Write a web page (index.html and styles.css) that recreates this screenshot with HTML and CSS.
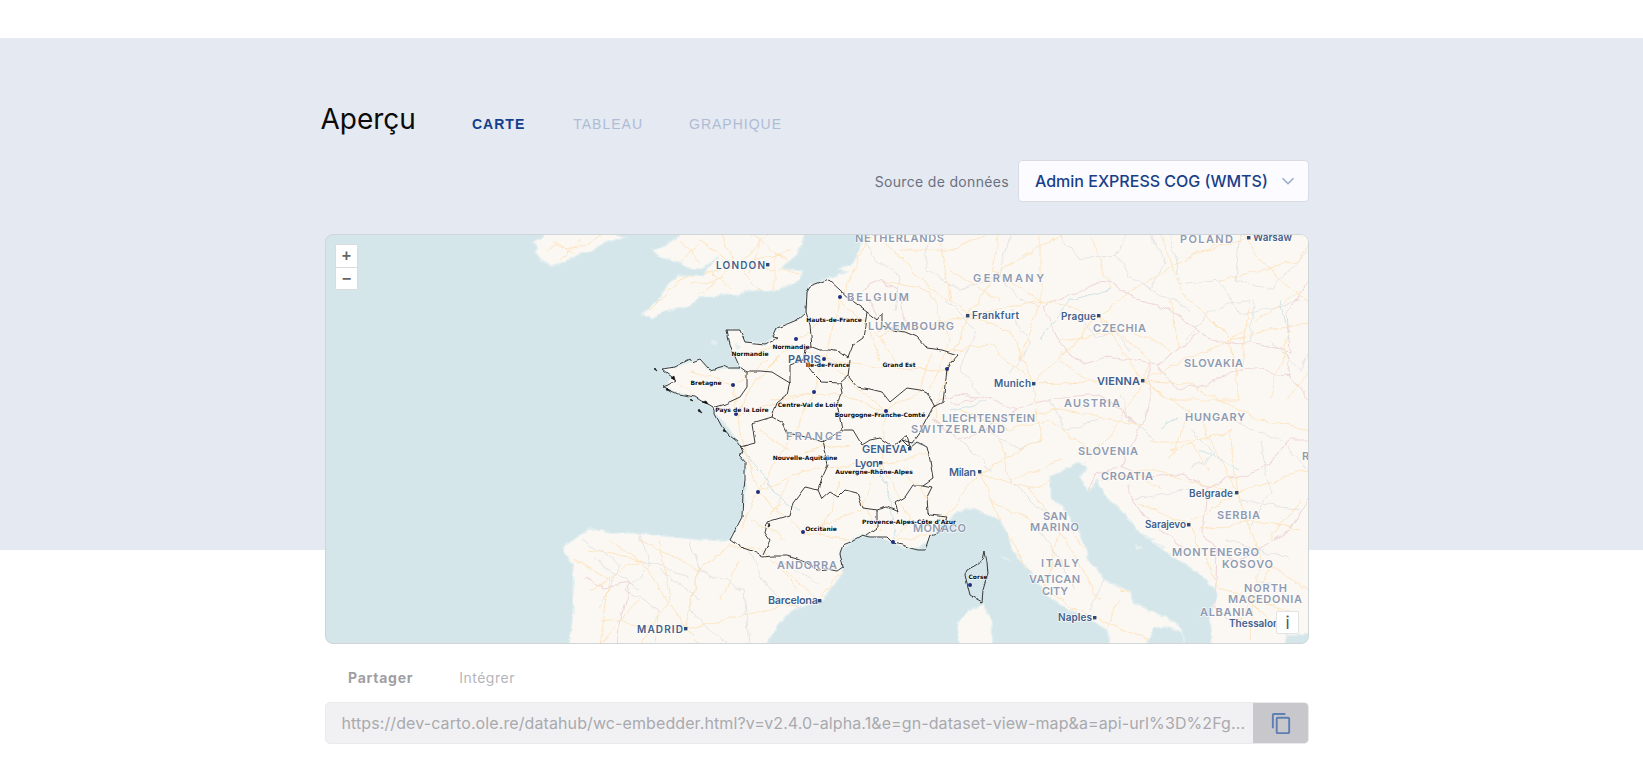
FILE: index.html
```html
<!DOCTYPE html>
<html lang="fr">
<head>
<meta charset="utf-8">
<title>Aperçu</title>
<link rel="stylesheet" href="styles.css">
</head>
<body>
<div class="band"></div>
<main class="preview">
  <header class="head">
    <h2 class="title">Aperçu</h2>
    <nav class="tabs">
      <span class="tab tab-active">CARTE</span>
      <span class="tab">TABLEAU</span>
      <span class="tab">GRAPHIQUE</span>
    </nav>
  </header>
  <div class="source">
    <span class="source-label">Source de données</span>
    <div class="select">
      <span>Admin EXPRESS COG (WMTS)</span>
      <svg class="chevron" viewBox="0 0 14 8"><path d="M1.5 1.2 7 6.6l5.5-5.4"/></svg>
    </div>
  </div>
  <section class="map">
    <svg class="map-svg" viewBox="325 234 984 410" preserveAspectRatio="none">
      <defs>
        <filter id="coast" filterUnits="userSpaceOnUse" x="315" y="224" width="1010" height="430">
          <feTurbulence type="fractalNoise" baseFrequency="0.11" numOctaves="3" seed="4"/>
          <feDisplacementMap in="SourceGraphic" scale="5" xChannelSelector="R" yChannelSelector="G"/>
        </filter>
        <filter id="wiggle" filterUnits="userSpaceOnUse" x="315" y="224" width="1010" height="430">
          <feTurbulence type="fractalNoise" baseFrequency="0.06" numOctaves="3" seed="9"/>
          <feDisplacementMap in="SourceGraphic" scale="9" xChannelSelector="R" yChannelSelector="G"/>
        </filter>
        <filter id="jag" filterUnits="userSpaceOnUse" x="315" y="224" width="1010" height="430">
          <feTurbulence type="fractalNoise" baseFrequency="0.1" numOctaves="2" seed="2"/>
          <feDisplacementMap in="SourceGraphic" scale="3.5" xChannelSelector="R" yChannelSelector="G"/>
        </filter>
        <clipPath id="landclip">
          <path d="M550 224 627 237 615 241 608 241 592 251 582 252 565 262 550 266 543 261 535 252 538 247 533 241 542 238Z"/>
          <path d="M678 224 678 236 665 246 653 249 658 257 678 262 692 269 705 267 718 256 702 276 678 276 668 284 658 301 642 314 653 319 665 311 688 306 698 297 713 296 727 294 738 297 745 291 775 291 798 281 803 271 782 267 798 254 808 224Z"/>
          <path d="M867 224 860 250 853 263 838 270 847 272 810 285 807 292 806 312 797 320 777 328 773 337 765 344 745 342 740 330 727 330 730 345 740 368 727 368 710 370 700 359 690 362 675 367 662 369 672 377 665 387 678 394 695 397 708 404 713 407 715 414 725 424 738 442 743 452 738 455 745 463 745 497 742 517 730 540 700 540 673 537 637 533 610 533 590 528 562 548 573 565 573 613 568 654 760 654 780 623 793 610 823 600 843 573 842 567 840 550 860 535 890 540 903 548 920 548 937 530 957 512 970 508 1000 520 1010 540 1013 553 1027 568 1040 587 1057 603 1090 620 1107 630 1113 654 1143 654 1153 628 1170 627 1183 635 1192 654 1177 623 1157 613 1133 603 1132 592 1110 583 1090 563 1083 540 1063 507 1050 498 1050 477 1078 462 1087 468 1080 477 1088 492 1097 480 1107 498 1123 512 1137 530 1170 555 1183 563 1207 580 1217 595 1210 617 1213 654 1283 654 1287 636 1320 632 1320 224Z"/>
          <path d="M957 622 970 610 983 605 992 620 993 654 960 654Z"/>
        </clipPath>
      </defs>
      <rect class="sea" x="325" y="234" width="984" height="410"/>
      <g class="land">
        <path d="M550 224 627 237 615 241 608 241 592 251 582 252 565 262 550 266 543 261 535 252 538 247 533 241 542 238Z"/>
        <path d="M678 224 678 236 665 246 653 249 658 257 678 262 692 269 705 267 718 256 702 276 678 276 668 284 658 301 642 314 653 319 665 311 688 306 698 297 713 296 727 294 738 297 745 291 775 291 798 281 803 271 782 267 798 254 808 224Z"/>
        <path d="M867 224 860 250 853 263 838 270 847 272 810 285 807 292 806 312 797 320 777 328 773 337 765 344 745 342 740 330 727 330 730 345 740 368 727 368 710 370 700 359 690 362 675 367 662 369 672 377 665 387 678 394 695 397 708 404 713 407 715 414 725 424 738 442 743 452 738 455 745 463 745 497 742 517 730 540 700 540 673 537 637 533 610 533 590 528 562 548 573 565 573 613 568 654 760 654 780 623 793 610 823 600 843 573 842 567 840 550 860 535 890 540 903 548 920 548 937 530 957 512 970 508 1000 520 1010 540 1013 553 1027 568 1040 587 1057 603 1090 620 1107 630 1113 654 1143 654 1153 628 1170 627 1183 635 1192 654 1177 623 1157 613 1133 603 1132 592 1110 583 1090 563 1083 540 1063 507 1050 498 1050 477 1078 462 1087 468 1080 477 1088 492 1097 480 1107 498 1123 512 1137 530 1170 555 1183 563 1207 580 1217 595 1210 617 1213 654 1283 654 1287 636 1320 632 1320 224Z"/>
        <path d="M957 622 970 610 983 605 992 620 993 654 960 654Z"/>
        <path d="M1143 534 1152 539 1147 539ZM1155 542 1165 547 1158 547ZM1136 545 1142 549 1137 549ZM1011 561 1005 557 1002 556ZM736 345 741 347 738 349ZM712 340 716 345 713 345Z"/>
      </g>
      <g clip-path="url(#landclip)">
        <path class="admin" d="M583 540 620 565 600 610M640 534 650 565 625 590 660 610 655 644M690 540 700 570 745 590 750 644M745 545 770 590 800 610M690 575 640 560M700 570 690 610 725 644M860 234 880 262 900 275 895 310M930 234 925 270 960 290 1000 276 1020 300 1040 306M945 300 975 330 960 370 985 397M1000 276 1010 234M1060 234 1080 260 1115 255 1130 234M1115 255 1135 280 1190 310M1170 234 1180 285 1220 280 1240 315 1300 300M1240 234 1235 280 1270 290 1309 250M1080 310 1095 340 1115 330 1130 350M1185 341 1210 310 1250 300M1250 342 1255 300M1120 395 1130 420 1155 440M1050 400 1065 430 1100 420M985 430 1020 450 1040 440M1010 480 1040 510 1065 520M1040 530 1060 560 1075 590M1090 610 1110 570M1230 420 1280 440 1309 470M1240 500 1300 510M1225 540 1290 560M1260 580 1300 600M1130 500 1190 490M1150 234 1165 262 1150 290M1010 310 1030 345 1010 375M1270 340 1300 370 1309 350M1190 430 1215 455 1190 470M1260 440 1270 490 1250 525M1170 590 1200 610M780 560 820 585M660 570 700 600M595 560 640 590M1000 560 1030 600M960 440 990 470"/>
        <path class="border" d="M1043 306 1067 296 1097 282 1113 284 1140 301 1157 304 1180 317 1200 331 1190 341 1157 364 1110 356 1083 364 1063 347 1053 327 1043 306M1200 331 1220 341 1250 342 1290 351 1287 314 1309 280M1157 364 1177 391 1210 384 1243 367 1290 377 1309 400M950 404 983 397 1017 407 1063 397 1100 394 1137 424M1150 364 1150 407 1137 434 1120 467 1150 477 1183 473 1207 487 1203 533 1217 550 1240 560 1290 530 1309 500M1130 483 1133 503 1157 527 1183 547M1207 487 1260 470 1290 440 1309 440M1120 467 1095 472 1088 492M933 407 955 395 983 397M933 420 960 440 985 430 1017 407M583 577 603 587 630 583 620 620 617 644M1217 550 1215 610 1240 625 1283 620M1290 377 1285 351M868 300 880 330 905 325 898 290 880 280 862 290"/>
        <path class="road" d="M700 240 735 265 790 250M720 234 735 265 770 234M735 265 680 280M735 265 700 295M735 265 760 290M735 265 800 272M680 280 650 310M700 245 680 262M750 234 790 262M710 270 730 290M690 285 725 278M680 240 700 262M760 240 750 275M775 250 775 290M545 250 590 245 600 234M560 260 580 240M552 244 575 252M824 359 790 345 750 352M824 359 840 300 870 234M824 359 814 392 790 440 758 492M824 359 900 370 947 369M824 359 886 411 881 463M881 463 910 520 893 542M881 463 930 455M758 492 803 532 850 540M758 492 740 530M803 532 860 510 881 463M736 414 814 392M736 414 733 385 690 370M736 414 758 492M805 450 850 445M893 542 930 535 980 472M758 492 805 470 881 463M840 300 880 335 968 316M880 335 900 370M947 369 968 316M947 369 935 420M790 345 760 375 736 414M796 339 825 320 867 320M770 400 814 392 860 400 900 420M733 385 770 360M880 360 870 330M930 355 920 390 886 411M905 470 930 500M790 480 770 520M840 480 820 540M860 500 880 530M700 400 680 385M760 430 790 450M750 520 785 540M686 629 640 560 590 550M686 629 600 620M686 629 700 570 730 545M686 629 760 610 820 601M820 601 840 570M820 601 760 550 730 545M686 629 700 643M700 570 640 540M590 590 640 560M600 643 640 600M820 601 790 630 770 643M575 560 610 580 600 644M610 540 640 560M660 540 670 600 640 644M740 560 720 600M780 570 800 590M880 234 910 270 968 316 1010 330 1034 384M968 316 1000 270 1060 234M968 316 1040 300 1099 316M1034 384 1099 316 1143 381M1034 384 1090 382 1143 381 1230 340 1309 320M1099 316 1140 285 1230 234M1099 316 1150 360 1143 381M1143 381 1190 385 1260 420 1309 430M1143 381 1170 400 1240 400M1034 384 1040 440 980 472M1143 381 1115 430 1080 465 1030 490 980 472M980 472 1000 520 1040 590 1095 618M1030 490 1060 530 1100 600M1095 618 1150 640M1060 530 1045 590M1237 493 1189 525 1220 590M1237 493 1150 470 1100 480M1237 493 1260 560 1250 640M1237 493 1200 420 1143 381M1237 493 1309 470M1260 560 1309 590M1189 525 1130 500M1000 234 990 270 1040 300M1160 234 1180 290 1230 340 1240 400M1230 340 1300 290M1240 234 1280 280 1309 300M950 270 1000 300M950 350 990 345 1034 384M1060 360 1090 382M1010 420 1060 410 1143 425M1170 450 1230 430 1237 493M900 250 950 250 990 234M880 280 930 290 950 340 930 390M940 240 950 300M1040 234 1040 300 1020 360M1090 234 1110 290M1200 250 1280 234M1220 280 1300 260 1309 240M1060 340 1130 330 1170 350M1170 300 1180 350M1250 300 1240 370M1290 330 1270 400M1190 410 1170 460M1290 400 1309 370M960 410 1010 430 1050 420 1090 450M1000 440 1010 480 1060 460M990 500 1030 520M1070 530 1120 590 1170 600M1120 600 1100 640M1150 440 1190 440 1210 470M1160 490 1130 470M1200 530 1250 520 1300 530M1220 590 1290 610M1270 570 1240 620M1300 500 1270 540M1290 640 1250 600"/>
        <path class="river" d="M1160 430 1180 418 1175 421M905 445 915 441 925 444M950 410 975 405 985 400M1040 340 1070 300 1110 290M1200 450 1240 470M1280 300 1290 340M880 470 890 500 893 540M760 470 775 495 800 510M745 452 758 470"/>
      </g>
      <path class="fr" d="M829 280 810 287 807 292 806 312 797 320 777 328 773 337 778 338 765 344 745 342 740 330 727 330 730 345 733 352 740 368 727 368 724 366 710 370 700 359 692 362 690 359 675 367 662 369 668 374 672 377 676 380 668 385 663 387 678 394 695 397 703 402 708 404 713 407 715 410 715 414 722 427 730 436 738 442 740 445 743 452 738 455 745 463 745 480 743 493 742 517 730 540 740 547 752 551 763 557 772 556 787 556 797 559 807 563 817 570 827 569 837 571 843 567 840 553 843 545 853 541 863 535 870 537 880 537 887 537 893 543 903 545 910 548 918 550 925 550 930 535 940 532 947 517 930 515 928 513 927 497 932 487 923 485 933 478 930 460 927 447 917 442 910 448 902 440 912 443 920 432 933 407 943 402 945 385 947 370 952 362 958 355 942 350 927 348 917 337 905 332 893 330 882 325 882 313 877 320 867 312 853 302 840 290 829 280Z"/>
      <path class="fr" d="M806 312 810 325 812 347 820 350 830 350 840 352 848 358 853 345 863 338 867 312M812 347 805 350 803 360 790 365 790 383 780 377 772 372 760 371 750 371 747 372 740 367M747 372 747 387 740 397 725 404 715 407M790 382 787 395 777 403 772 417 762 420 752 423 755 443 740 447M803 360 813 373 822 382 840 383 848 376 850 360M848 376 857 387 870 389 882 392 890 402 907 388 920 390 927 393 935 407M840 383 842 393 837 403 842 430 853 430 862 445 870 440 880 438 893 447 907 435 910 447M772 417 783 423 788 433 810 438 823 442 842 430M823 440 828 465 822 478 818 490 805 487 793 503 790 515 767 522 765 533 770 540 763 555M818 490 822 499 830 492 838 497 845 490 857 493 863 508 877 510 877 528 867 535M877 510 887 507 898 512 895 503 905 497 913 485 923 485"/>
      <path class="fr" d="M967 570 976 565 983 560 985 551 987 563 988 573 983 590 982 602 970 595 968 587 965 575Z"/>
      <path class="fr-blot" d="M702 402 708 404 706 401ZM698 411 702 413 699 409ZM671 378 675 380 674 376ZM769 523 768 527 770 526ZM654 369 657 371 655 368ZM666 390 670 391 667 388ZM690 400 693 401 691 399ZM723 431 726 432 724 429Z"/>
      <g class="country">
        <text x="855" y="242" textLength="89">NETHERLANDS</text>
        <text x="847" y="301" textLength="62">BELGIUM</text>
        <text x="868" y="330" textLength="86">LUXEMBOURG</text>
        <text x="973" y="282" textLength="71">GERMANY</text>
        <text x="1180" y="243" textLength="53">POLAND</text>
        <text x="1093" y="332" textLength="53">CZECHIA</text>
        <text x="1184" y="367" textLength="59">SLOVAKIA</text>
        <text x="1064" y="407" textLength="56">AUSTRIA</text>
        <text x="1185" y="421" textLength="60">HUNGARY</text>
        <text x="942" y="422" textLength="93">LIECHTENSTEIN</text>
        <text x="911" y="433" textLength="94">SWITZERLAND</text>
        <text x="786" y="440" textLength="56">FRANCE</text>
        <text x="1078" y="455" textLength="60">SLOVENIA</text>
        <text x="1101" y="480" textLength="52">CROATIA</text>
        <text x="1302" y="460">R</text>
        <text x="1217" y="519" textLength="43">SERBIA</text>
        <text x="913" y="532" textLength="53">MONACO</text>
        <text x="777" y="569" textLength="60">ANDORRA</text>
        <text x="1043" y="520" textLength="24">SAN</text>
        <text x="1030" y="531" textLength="49">MARINO</text>
        <text x="1041" y="567" textLength="38">ITALY</text>
        <text x="1029" y="583" textLength="51">VATICAN</text>
        <text x="1042" y="595" textLength="26">CITY</text>
        <text x="1172" y="556" textLength="87">MONTENEGRO</text>
        <text x="1222" y="568" textLength="51">KOSOVO</text>
        <text x="1244" y="592" textLength="43">NORTH</text>
        <text x="1228" y="603" textLength="74">MACEDONIA</text>
        <text x="1200" y="616" textLength="53">ALBANIA</text>
      </g>
      <g class="city">
        <text x="716" y="269" textLength="49">LONDON</text>
        <text x="788" y="363" textLength="33" class="city-lg">PARIS</text>
        <text x="862" y="453" textLength="45" class="city-lg">GENEVA</text>
        <text x="855" y="467" textLength="24" class="city-lg">Lyon</text>
        <text x="949" y="476" textLength="27" class="city-lg">Milan</text>
        <text x="768" y="604" textLength="50" class="city-lg">Barcelona</text>
        <text x="637" y="633" textLength="46">MADRID</text>
        <text x="1253" y="241" textLength="39">Warsaw</text>
        <text x="972" y="319" textLength="47">Frankfurt</text>
        <text x="1061" y="320" textLength="35">Prague</text>
        <text x="994" y="387" textLength="37">Munich</text>
        <text x="1097" y="385" textLength="43" class="city-lg">VIENNA</text>
        <text x="1189" y="497" textLength="44">Belgrade</text>
        <text x="1145" y="528" textLength="41">Sarajevo</text>
        <text x="1058" y="621" textLength="34">Naples</text>
        <text x="1229" y="627">Thessaloniki</text>
      </g>
      <g class="city-dot">
        <rect x="766" y="263" width="3.4" height="3.4"/>
        <rect x="978" y="470" width="3.4" height="3.4"/>
        <rect x="818" y="599" width="3.4" height="3.4"/>
        <rect x="684" y="627" width="3.4" height="3.4"/>
        <rect x="1247" y="236" width="3.4" height="3.4"/>
        <rect x="966" y="314" width="3.4" height="3.4"/>
        <rect x="1097" y="314" width="3.4" height="3.4"/>
        <rect x="1032" y="382" width="3.4" height="3.4"/>
        <rect x="1141" y="379" width="3.4" height="3.4"/>
        <rect x="1235" y="491" width="3.4" height="3.4"/>
        <rect x="1187" y="523" width="3.4" height="3.4"/>
        <rect x="1093" y="616" width="3.4" height="3.4"/>
        <rect x="879" y="461" width="3.4" height="3.4"/>
        <rect x="908" y="447" width="3.4" height="3.4"/>
      </g>
      <g class="dot">
        <circle cx="840" cy="297" r="2"/><circle cx="796" cy="339" r="2"/><circle cx="824" cy="359" r="2"/>
        <circle cx="947" cy="369" r="2"/><circle cx="733" cy="385" r="2"/><circle cx="814" cy="392" r="2"/>
        <circle cx="736" cy="414" r="2"/><circle cx="886" cy="411" r="2"/><circle cx="758" cy="492" r="2"/>
        <circle cx="803" cy="532" r="2"/><circle cx="893" cy="542" r="2"/><circle cx="970" cy="585" r="2"/>
      </g>
      <g class="region">
        <text x="834" y="322">Hauts-de-France</text>
        <text x="750" y="356">Normandie</text>
        <text x="791" y="349">Normandie</text>
        <text x="828" y="367">Ile-de-France</text>
        <text x="899" y="367">Grand Est</text>
        <text x="706" y="385">Bretagne</text>
        <text x="742" y="412">Pays de la Loire</text>
        <text x="810" y="407">Centre-Val de Loire</text>
        <text x="880" y="417">Bourgogne-Franche-Comté</text>
        <text x="805" y="460">Nouvelle-Aquitaine</text>
        <text x="874" y="474">Auvergne-Rhône-Alpes</text>
        <text x="821" y="531">Occitanie</text>
        <text x="909" y="524">Provence-Alpes-Côte d'Azur</text>
        <text x="978" y="579">Corse</text>
      </g>
    </svg>
    <div class="zoom">
      <button class="zoom-btn">+</button>
      <button class="zoom-btn">−</button>
    </div>
    <button class="attrib">i</button>
  </section>
  <nav class="share-tabs">
    <span class="share-tab share-active">Partager</span>
    <span class="share-tab">Intégrer</span>
  </nav>
  <div class="url">
    <span class="url-text">https://dev-carto.ole.re/datahub/wc-embedder.html?v=v2.4.0-alpha.1&amp;e=gn-dataset-view-map&amp;a=api-url%3D%2Fg...</span>
    <span class="copy">
      <svg class="copy-icon" viewBox="0 0 24 24"><path d="M16 1H4c-1.1 0-2 .9-2 2v14h2V3h12V1zm3 4H8c-1.1 0-2 .9-2 2v14c0 1.1.9 2 2 2h11c1.1 0 2-.9 2-2V7c0-1.1-.9-2-2-2zm0 16H8V7h11v14z"/></svg>
    </span>
  </div>
</main>
</body>
</html>
```
FILE: styles.css
```css
* { box-sizing: border-box; }
html, body { margin: 0; padding: 0; height: 100%; overflow: hidden; }
body { background: #fff; font-family: Inter, "Liberation Sans", sans-serif; position: relative; }

.band { position: absolute; left: 0; right: 0; top: 38px; height: 512px; background: #e5e9f1; }

.preview { position: relative; width: 984px; margin-left: 325px; padding-top: 102px; }

.head { display: flex; align-items: baseline; height: 58px; margin-left: -5px; }
.title { margin: 0 0 0 .5px; font-size: 28px; line-height: 34px; font-weight: 400; color: #0b0b0b; width: 151.5px; }
.tabs { display: flex; gap: 46px; }
.tab { font-family: "Liberation Sans", sans-serif; font-size: 14px; letter-spacing: 1px; color: #aebcd6; }
.tab-active { font-weight: 700; letter-spacing: 1px; margin-right: 2px; color: #123f8b; }

.source { display: flex; justify-content: flex-end; align-items: center; gap: 9px; height: 42px; }
.source-label { font-size: 14px; letter-spacing: 0.33px; color: #6a7180; }
.select { display: flex; align-items: center; justify-content: space-between; width: 291px; height: 42px; padding: 0 13px 0 16px; background: #fcfbff; border: 1px solid #d9dce4; border-radius: 4px; font-size: 16px; font-weight: 500; color: #174089; }
.chevron { width: 14px; height: 8px; fill: none; stroke: #9fb0d0; stroke-width: 1.6; }

.map { position: relative; height: 410px; margin-top: 32px; border-radius: 8px; overflow: hidden; }
.map::after { content: ""; position: absolute; inset: 0; border: 1px solid #d0d5d8; border-radius: 8px; pointer-events: none; }
.map-svg { display: block; width: 984px; height: 410px; }

.sea { fill: #d4e6e9; }
.land { filter: url(#coast); }
.land path { fill: #fbf8f4; stroke: #e2eeef; stroke-width: 1.5; }
.admin { fill: none; stroke: #dfdfdf; stroke-width: 0.8; filter: url(#wiggle); }
.border { fill: none; stroke: #efd8d8; stroke-width: 1.1; filter: url(#wiggle); }
.road { fill: none; stroke: #fde3bb; stroke-width: 0.9; filter: url(#wiggle); }
.river { fill: none; stroke: #cfe4e6; stroke-width: 1; filter: url(#wiggle); }
.fr { fill: none; stroke: #1b1b1b; stroke-width: 0.85; stroke-linejoin: round; filter: url(#jag); }
.fr-blot { fill: #111; stroke: #111; stroke-width: 0.6; }

.country text { font: 600 11px Inter, sans-serif; fill: #8f9bb0; paint-order: stroke; stroke: rgba(255,255,255,.75); stroke-width: 1.5px; }
.city text { font: 600 10px Inter, sans-serif; fill: #41608c; paint-order: stroke; stroke: rgba(255,255,255,.75); stroke-width: 1.5px; }
.city .city-lg { font-size: 11px; }
.city-dot rect { fill: #2f4a75; }
.dot circle { fill: #1f2f80; }
.region text { font: 700 6px "DejaVu Sans", sans-serif; fill: #0a0a0a; text-anchor: middle; paint-order: stroke; stroke: rgba(255,255,255,.8); stroke-width: 1.2px; }

.zoom { position: absolute; left: 10px; top: 10px; display: flex; flex-direction: column; width: 23px; background: #fff; border: 1px solid #d8dcdf; border-radius: 2px; }
.zoom-btn { width: 21px; height: 22px; padding: 0; margin: 0; border: 0; background: #fff; font: 700 16px "Liberation Sans", sans-serif; color: #666; line-height: 22px; }
.zoom-btn + .zoom-btn { border-top: 1px solid #d8dcdf; }
.attrib { position: absolute; right: 10px; bottom: 10px; width: 23px; height: 23px; padding: 0; border: 1px solid #e2e4e6; border-radius: 2px; background: #fff; font: 400 17px Inter, sans-serif; line-height: 22px; color: #4f5a66; }

.share-tabs { display: flex; gap: 46px; height: 58px; padding: 25px 0 0 23px; }
.share-tab { font-size: 14px; line-height: 17px; letter-spacing: 0.5px; color: #b5b5b9; }
.share-active { font-weight: 700; color: #9f9fa3; letter-spacing: 0.75px; }

.url { display: flex; height: 42px; background: #f1f1f3; border: 1px solid #eaeaed; border-radius: 5px; overflow: hidden; }
.url-text { flex: 1; display: flex; align-items: center; padding-left: 15.5px; font-size: 16px; letter-spacing: 0.1px; color: #a9a9ae; white-space: nowrap; overflow: hidden; }
.copy { width: 56px; margin: -1px; display: flex; align-items: center; justify-content: center; background: #c7c7cc; }
.copy-icon { width: 23px; height: 23px; fill: #5d7fb3; }
```
